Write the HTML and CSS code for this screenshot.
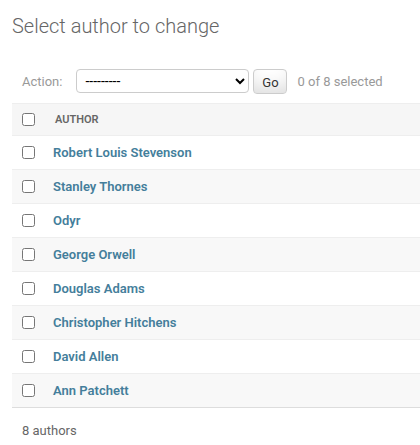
FILE: index.html
```html
<!DOCTYPE html>
<html lang="en">
<head>
<meta charset="utf-8">
<title>Select author to change</title>
<link rel="stylesheet" href="styles.css">
</head>
<body>
<div class="content">
  <h1 class="title">Select author to change</h1>
  <div class="actions">
    <label class="action-label" for="action">Action:</label>
    <select id="action" class="action-select">
      <option>---------</option>
      <option>Delete selected authors</option>
    </select>
    <button class="go" type="button">Go</button>
    <span class="counter">0 of 8 selected</span>
  </div>
  <table class="results">
    <colgroup>
      <col class="col-check">
      <col class="col-name">
    </colgroup>
    <thead>
      <tr>
        <th class="check-col"><input type="checkbox" class="cb"></th>
        <th class="head-name">Author</th>
      </tr>
    </thead>
    <tbody>
      <tr><td class="check-col"><input type="checkbox" class="cb"></td><th class="name"><a href="#">Robert Louis Stevenson</a></th></tr>
      <tr><td class="check-col"><input type="checkbox" class="cb"></td><th class="name"><a href="#">Stanley Thornes</a></th></tr>
      <tr><td class="check-col"><input type="checkbox" class="cb"></td><th class="name"><a href="#">Odyr</a></th></tr>
      <tr><td class="check-col"><input type="checkbox" class="cb"></td><th class="name"><a href="#">George Orwell</a></th></tr>
      <tr><td class="check-col"><input type="checkbox" class="cb"></td><th class="name"><a href="#">Douglas Adams</a></th></tr>
      <tr><td class="check-col"><input type="checkbox" class="cb"></td><th class="name"><a href="#">Christopher Hitchens</a></th></tr>
      <tr><td class="check-col"><input type="checkbox" class="cb"></td><th class="name"><a href="#">David Allen</a></th></tr>
      <tr><td class="check-col"><input type="checkbox" class="cb"></td><th class="name"><a href="#">Ann Patchett</a></th></tr>
    </tbody>
  </table>
  <p class="paginator">8 authors</p>
</div>
</body>
</html>
```

FILE: styles.css
```css
html, body {
  margin: 0;
  padding: 0;
  background: #fff;
}
body {
  font-family: Roboto, "Liberation Sans", sans-serif;
  font-size: 14px;
  color: #333;
  overflow: hidden;
}
.content {
  padding: 15px 0 0 12px;
}
.title {
  margin: 0 0 21px 0;
  font-size: 20px;
  font-weight: 300;
  color: #666;
  line-height: 23px;
}
.actions {
  display: flex;
  align-items: center;
  height: 24px;
  padding: 10px;
  color: #999;
  font-size: 13px;
}
.action-label {
  color: #999;
  margin-right: 14px;
}
.action-select {
  width: 173px;
  height: 24px;
  box-sizing: border-box;
  border: 1px solid #ccc;
  border-radius: 4px;
  background: #fff;
  color: #000;
  font-family: Roboto, "Liberation Sans", sans-serif;
  font-size: 14px;
  padding: 0 0 0 4px;
  margin: 0;
}
.go {
  margin-left: 4px;
  height: 25px;
  width: 34px;
  box-sizing: border-box;
  border: 1px solid #ccc;
  border-radius: 4px;
  background: #fff;
  box-shadow: inset 0 -15px 20px -10px rgba(0, 0, 0, 0.15);
  font-family: Roboto, "Liberation Sans", sans-serif;
  font-size: 13px;
  color: #333;
  padding: 2px 0 0 0;
}
.counter {
  margin-left: 10px;
  color: #999;
  font-size: 13px;
}
.results {
  width: 408px;
  table-layout: fixed;
  border-collapse: separate;
  border-spacing: 0;
  margin-top: 0;
}
.col-check {
  width: 33px;
}
thead th {
  background: #f6f6f6;
  height: 32px;
  box-sizing: border-box;
  border-top: 1px solid #eee;
  padding: 0;
  text-align: left;
  vertical-align: middle;
}
.head-name {
  font-size: 11px;
  font-weight: 600;
  color: #666;
  text-transform: uppercase;
  padding-left: 10px;
}
.check-col {
  padding: 0 0 0 10px;
  vertical-align: middle;
}
.cb {
  display: block;
  margin: 0;
  width: 13px;
  height: 13px;
}
tbody td, tbody th {
  height: 34px;
  box-sizing: border-box;
  border-top: 1px solid #eee;
  vertical-align: middle;
}
tbody tr:nth-child(even) td, tbody tr:nth-child(even) th {
  background: #f8f8f8;
}
.name {
  text-align: left;
  padding: 0 0 0 8px;
  font-weight: 600;
  font-size: 13px;
}
.name a {
  color: #447e9b;
  text-decoration: none;
}
.paginator {
  margin: 0;
  padding: 13px 10px 0 10px;
  border-top: 1px solid #ddd;
  font-size: 13px;
  color: #666;
  line-height: 20px;
}
```
